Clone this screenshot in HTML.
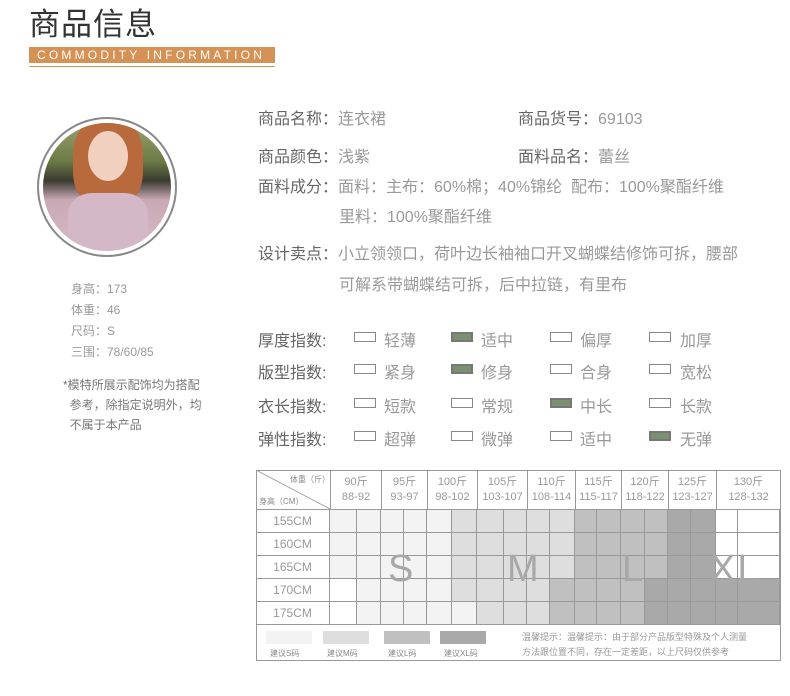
<!DOCTYPE html>
<html><head><meta charset="utf-8"><style>
*{margin:0;padding:0;box-sizing:border-box}
body{width:790px;height:696px;background:#fff;position:relative;overflow:hidden;font-family:"Liberation Sans","Noto Sans CJK SC",sans-serif}
.a{position:absolute;white-space:nowrap}
.lab{color:#666;font-size:16px}
.val{color:#999;font-size:16px}
.cb{position:absolute;width:22px;height:10px;border:1px solid #888;background:#fff}
.cb.on{background:#7a9070;border:2px solid #777}
.sm{color:#999;font-size:12px}
</style></head><body>
<div class="a" style="left:29px;top:8px;font-size:31px;line-height:34px;color:#333;letter-spacing:1px">商品信息</div>
<div class="a" style="left:29px;top:47px;width:246px;height:16px;background:#d69155;color:#fff;font-size:12px;letter-spacing:3.2px;line-height:16px;padding-left:8px">COMMODITY INFORMATION</div>
<div class="a" style="left:29px;top:66px;width:246px;height:1px;background:#d69155"></div>

<div class="a" style="left:37px;top:117px;width:140px;height:140px;border-radius:50%;border:2px solid #888;background:#fff"></div>
<div class="a" style="left:43px;top:123px;width:128px;height:128px;border-radius:50%;overflow:hidden;background:linear-gradient(180deg,#9aa070 0%,#6b7a45 30%,#3a3a30 45%,#c8a8b4 60%,#d7bcc8 100%)">
<div style="position:absolute;left:30px;top:-5px;width:70px;height:90px;border-radius:40%;background:#b86a3c"></div>
<div style="position:absolute;left:45px;top:8px;width:40px;height:50px;border-radius:50%;background:#f2d0c0"></div>
<div style="position:absolute;left:25px;top:70px;width:80px;height:70px;border-radius:30%;background:#d4b8c8"></div>
</div>

<div class="a sm" style="left:71px;top:279px;line-height:21px">身高：173<br>体重：46<br>尺码：S<br>三围：78/60/85</div>
<div class="a sm" style="left:63px;top:375px;line-height:20px;color:#777">*模特所展示配饰均为搭配<br>&nbsp;&nbsp;参考，除指定说明外，均<br>&nbsp;&nbsp;不属于本产品</div>

<div class="a lab" style="left:258px;top:105px">商品名称：<span class="val">连衣裙</span></div>
<div class="a lab" style="left:518px;top:105px">商品货号：<span class="val">69103</span></div>
<div class="a lab" style="left:258px;top:143px">商品颜色：<span class="val">浅紫</span></div>
<div class="a lab" style="left:518px;top:143px">面料品名：<span class="val">蕾丝</span></div>
<div class="a lab" style="left:258px;top:173px">面料成分：<span class="val">面料：主布：60%棉；40%锦纶&nbsp;&nbsp;配布：100%聚酯纤维</span></div>
<div class="a val" style="left:339px;top:203px">里料：100%聚酯纤维</div>
<div class="a lab" style="left:258px;top:240px">设计卖点：<span class="val">小立领领口，荷叶边长袖袖口开叉蝴蝶结修饰可拆，腰部</span></div>
<div class="a val" style="left:339px;top:271px">可解系带蝴蝶结可拆，后中拉链，有里布</div>

<div class="a lab" style="left:258px;top:327px">厚度指数:</div>
<div class="a lab" style="left:258px;top:359px">版型指数:</div>
<div class="a lab" style="left:258px;top:393px">衣长指数:</div>
<div class="a lab" style="left:258px;top:426px">弹性指数:</div>

<div class="cb" style="left:354px;top:332px"></div><div class="a val" style="left:384px;top:327px">轻薄</div>
<div class="cb on" style="left:451px;top:332px"></div><div class="a val" style="left:481px;top:327px">适中</div>
<div class="cb" style="left:550px;top:332px"></div><div class="a val" style="left:580px;top:327px">偏厚</div>
<div class="cb" style="left:649px;top:332px"></div><div class="a val" style="left:680px;top:327px">加厚</div>

<div class="cb" style="left:354px;top:364px"></div><div class="a val" style="left:384px;top:359px">紧身</div>
<div class="cb on" style="left:451px;top:364px"></div><div class="a val" style="left:481px;top:359px">修身</div>
<div class="cb" style="left:550px;top:364px"></div><div class="a val" style="left:580px;top:359px">合身</div>
<div class="cb" style="left:649px;top:364px"></div><div class="a val" style="left:680px;top:359px">宽松</div>

<div class="cb" style="left:354px;top:398px"></div><div class="a val" style="left:384px;top:393px">短款</div>
<div class="cb" style="left:451px;top:398px"></div><div class="a val" style="left:481px;top:393px">常规</div>
<div class="cb on" style="left:550px;top:398px"></div><div class="a val" style="left:580px;top:393px">中长</div>
<div class="cb" style="left:649px;top:398px"></div><div class="a val" style="left:680px;top:393px">长款</div>

<div class="cb" style="left:354px;top:431px"></div><div class="a val" style="left:384px;top:426px">超弹</div>
<div class="cb" style="left:451px;top:431px"></div><div class="a val" style="left:481px;top:426px">微弹</div>
<div class="cb" style="left:550px;top:431px"></div><div class="a val" style="left:580px;top:426px">适中</div>
<div class="cb on" style="left:649px;top:431px"></div><div class="a val" style="left:680px;top:426px">无弹</div>

<div id="tbl"></div>
<div class="a" style="left:256px;top:470px;width:525px;height:191px;border:1px solid #999"></div>
<script>
(function(){
var E=[330,357,381,404,427,452,477,504,527,550,575,597,621,645,668,691,716,738,780];
var R=[509,532,555,578,601,624];
var C={s:'#f3f3f3',m:'#dedede',l:'#c0c0c0',x:'#a9a9a9',w:'#fff'};
var rows=[
"sssssmmmmmllllxxww","sssssmmmmmllllxxww","sssssmmmmmllllxxww",
"wssssmmmmllllxxxxx","wsssssmmmllllxxxxx"];
var h='';
for(var r=0;r<5;r++){
 h+='<div class="a" style="left:256px;top:'+R[r]+'px;width:74px;height:'+(R[r+1]-R[r])+'px;border-top:1px solid #999;border-right:1px solid #999;color:#999;font-size:12px;text-align:center;line-height:22px">'+(155+5*r)+'CM</div>';
 for(var c=0;c<18;c++){
  h+='<div class="a" style="left:'+E[c]+'px;top:'+R[r]+'px;width:'+(E[c+1]-E[c])+'px;height:'+(R[r+1]-R[r])+'px;background:'+C[rows[r][c]]+';border-top:1px solid #999;border-right:1px solid #999"></div>';
 }
}
var G=[330,381,427,477,527,575,621,668,716,780];
var L=[["90斤","88-92"],["95斤","93-97"],["100斤","98-102"],["105斤","103-107"],["110斤","108-114"],["115斤","115-117"],["120斤","118-122"],["125斤","123-127"],["130斤","128-132"]];
for(var g=0;g<9;g++){
 h+='<div class="a" style="left:'+G[g]+'px;top:470px;width:'+(G[g+1]-G[g])+'px;height:39px;border-left:1px solid #999;color:#999;font-size:11px;text-align:center;line-height:15px;padding-top:5px">'+L[g][0]+'<br>'+L[g][1]+'</div>';
}
h+='<div class="a" style="left:290px;top:474px;font-size:8px;color:#888">体重（斤）</div><div class="a" style="left:259px;top:496px;font-size:8px;color:#888">身高（CM）</div>';
h+='<svg class="a" style="left:256px;top:470px" width="74" height="39"><line x1="0" y1="0" x2="74" y2="39" stroke="#999" stroke-width="0.8"/></svg>';
h+='<div class="a" style="left:256px;top:624px;width:525px;height:1px;background:#999"></div>';
var big=[["S",388],["M",507],["L",622],["XL",710]];
big.forEach(function(b){h+='<div class="a" style="left:'+b[1]+'px;top:548px;font-size:38px;color:#a8a8a8;font-weight:300;letter-spacing:2px">'+b[0]+'</div>';});
var lg=[["#f3f3f3","建议S码",266],["#dedede","建议M码",323],["#c0c0c0","建议L码",384],["#a9a9a9","建议XL码",440]];
lg.forEach(function(b){h+='<div class="a" style="left:'+b[2]+'px;top:631px;width:46px;height:13px;background:'+b[0]+'"></div><div class="a" style="left:'+(b[2]+4)+'px;top:648px;font-size:8px;color:#888">'+b[1]+'</div>';});
h+='<div class="a" style="left:522px;top:630px;font-size:9px;color:#999;line-height:15px">温馨提示：温馨提示：由于部分产品版型特殊及个人测量<br>方法跟位置不同，存在一定差距，以上尺码仅供参考</div>';
document.getElementById('tbl').innerHTML=h;
})();
</script>
</body></html>
